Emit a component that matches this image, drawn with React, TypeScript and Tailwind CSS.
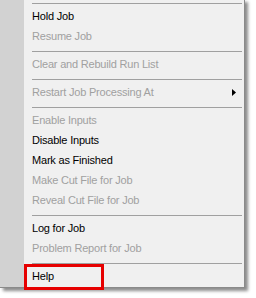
import React from 'react';

type Entry =
  | { kind: 'item'; label: string; disabled?: boolean; submenu?: boolean; highlight?: boolean }
  | { kind: 'sep' };

const entries: Entry[] = [
  { kind: 'sep' },
  { kind: 'item', label: 'Hold Job' },
  { kind: 'item', label: 'Resume Job', disabled: true },
  { kind: 'sep' },
  { kind: 'item', label: 'Clear and Rebuild Run List', disabled: true },
  { kind: 'sep' },
  { kind: 'item', label: 'Restart Job Processing At', disabled: true, submenu: true },
  { kind: 'sep' },
  { kind: 'item', label: 'Enable Inputs', disabled: true },
  { kind: 'item', label: 'Disable Inputs' },
  { kind: 'item', label: 'Mark as Finished' },
  { kind: 'item', label: 'Make Cut File for Job', disabled: true },
  { kind: 'item', label: 'Reveal Cut File for Job', disabled: true },
  { kind: 'sep' },
  { kind: 'item', label: 'Log for Job' },
  { kind: 'item', label: 'Problem Report for Job', disabled: true },
  { kind: 'sep' },
  { kind: 'item', label: 'Help', highlight: true },
];

export default function App() {
  return (
    <div className="w-[256px] h-[298px] bg-white overflow-hidden" style={{ fontFamily: '"Liberation Sans", Arial, sans-serif' }}>
      <div className="relative w-[245px] h-[289px] -mt-[1px] flex bg-[#f0f0f0] border-r border-b border-[#8a8a8a] shadow-[3px_3px_3px_rgba(0,0,0,0.45)]">
        <div className="w-[24px] shrink-0 bg-[#d2d2d2]" />
        <div className="flex-1 flex flex-col">
          {entries.map((e, i) =>
            e.kind === 'sep' ? (
              <div key={i} className="h-[8px] flex items-center pl-[8px] pr-[2px]">
                <div className="h-px w-full bg-[#a0a0a0]" />
              </div>
            ) : (
              <div
                key={i}
                className={`relative h-[20px] flex items-center pl-[8px] pb-[2px] text-[11px] tracking-[-0.2px] ${e.disabled ? 'text-[#a0a0a0]' : 'text-black'}`}
              >
                <span>{e.label}</span>
                {e.submenu && (
                  <svg className="absolute right-[8px] top-[6px]" width="4" height="7" viewBox="0 0 4 7">
                    <path d="M0 0 L4 3.5 L0 7 Z" fill="#000" />
                  </svg>
                )}
                {e.highlight && (
                  <div className="absolute left-0 top-[-3px] w-[80px] h-[26px] border-[3px] border-[#e60000]" />
                )}
              </div>
            )
          )}
        </div>
      </div>
    </div>
  );
}
